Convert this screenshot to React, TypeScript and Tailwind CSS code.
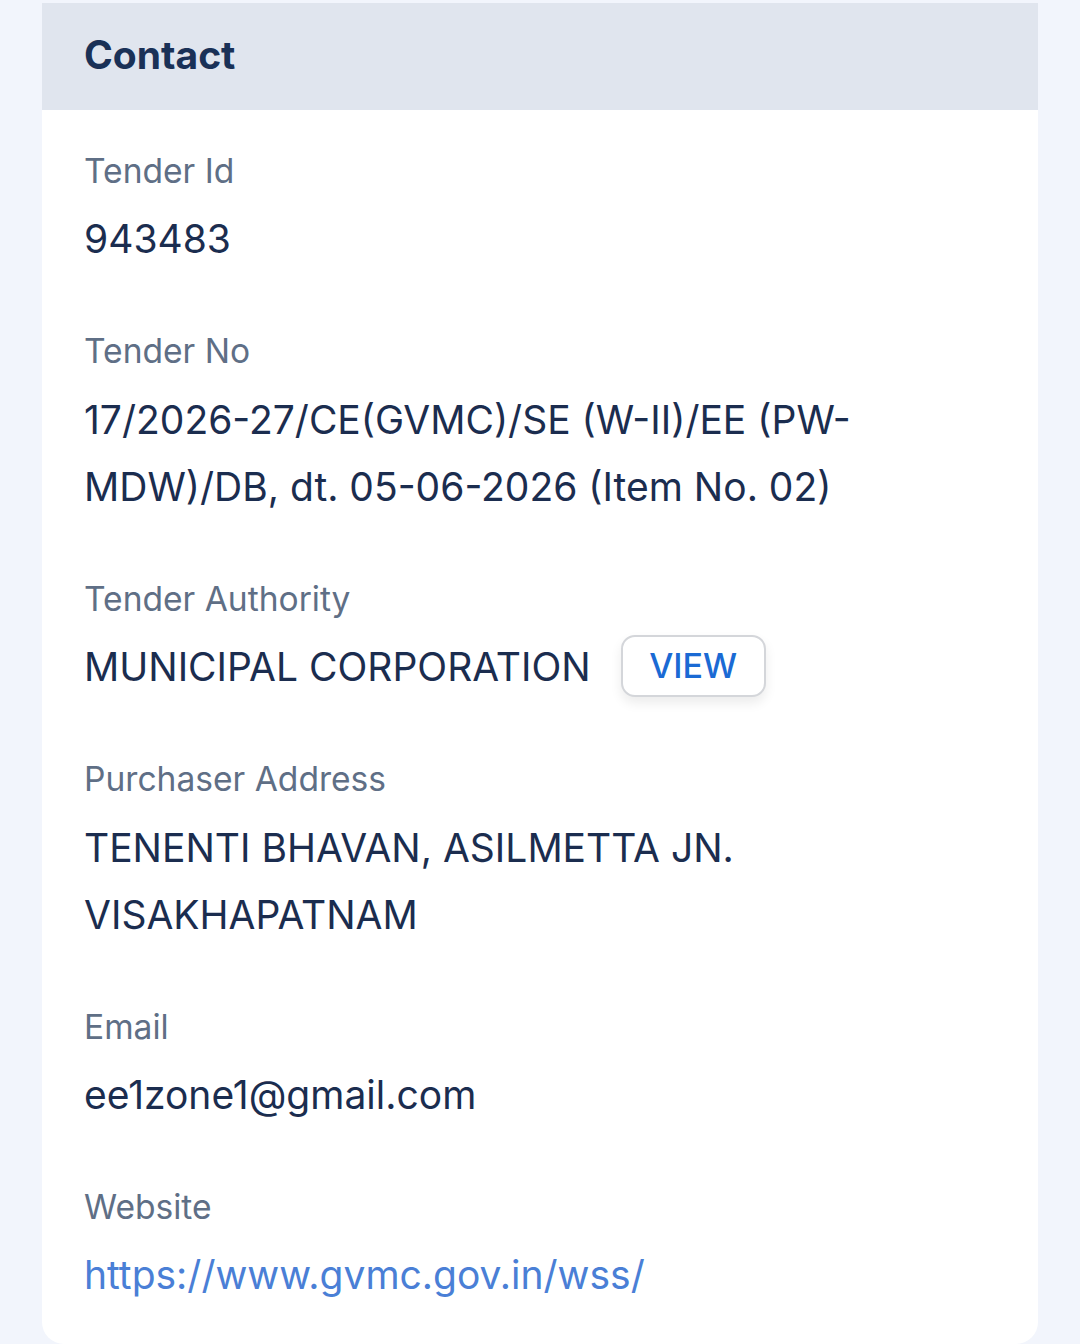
import React from "react";

const Label = ({ children }: { children: React.ReactNode }) => (
  <div className="text-[33.6px] leading-[44px] text-[#5f6f86]">{children}</div>
);

export default function App() {
  return (
    <div
      className="min-h-[1344px] bg-[#f2f5fc] pl-[42px] pr-[42px] pt-[3px]"
      style={{ fontFamily: "Inter, 'Noto Sans', sans-serif" }}
    >
      <div className="bg-white rounded-b-[22px] min-h-[1341px] overflow-hidden">
        <div className="bg-[#e0e5ee] h-[107px] flex items-center px-[42px] pb-[4px]">
          <h2 className="text-[39px] font-bold text-[#1a3157] leading-none">Contact</h2>
        </div>
        <div className="px-[42px] pt-[39px] flex flex-col gap-[57px] text-[#1b2d4f]">
          <div className="flex flex-col gap-[13px]">
            <Label>Tender Id</Label>
            <div className="text-[39px] leading-[66px]">943483</div>
          </div>
          <div className="flex flex-col gap-[13px]">
            <Label>Tender No</Label>
            <div className="text-[39px] leading-[67px] max-w-[820px]">
              17/2026-27/CE(GVMC)/SE (W-II)/EE (PW-MDW)/DB, dt. 05-06-2026 (Item No. 02)
            </div>
          </div>
          <div className="flex flex-col gap-[13px]">
            <Label>Tender Authority</Label>
            <div className="flex items-center gap-[30px] h-[66px]">
              <span className="text-[39px] leading-[66px]">MUNICIPAL CORPORATION</span>
              <button className="-mt-[3px] h-[62px] w-[145px] rounded-[14px] border-2 border-[#d4d6da] bg-white text-[#1a6ad4] text-[34px] font-medium shadow-[0_6px_12px_rgba(0,0,0,0.08)]">
                VIEW
              </button>
            </div>
          </div>
          <div className="flex flex-col gap-[13px]">
            <Label>Purchaser Address</Label>
            <div className="text-[39px] leading-[67px] max-w-[820px]">
              TENENTI BHAVAN, ASILMETTA JN. VISAKHAPATNAM
            </div>
          </div>
          <div className="flex flex-col gap-[13px]">
            <Label>Email</Label>
            <div className="text-[39px] leading-[66px]">ee1zone1@gmail.com</div>
          </div>
          <div className="flex flex-col gap-[13px]">
            <Label>Website</Label>
            <a className="text-[39px] leading-[66px] text-[#4a7fd6]" href="#">
              https://www.gvmc.gov.in/wss/
            </a>
          </div>
        </div>
      </div>
    </div>
  );
}
